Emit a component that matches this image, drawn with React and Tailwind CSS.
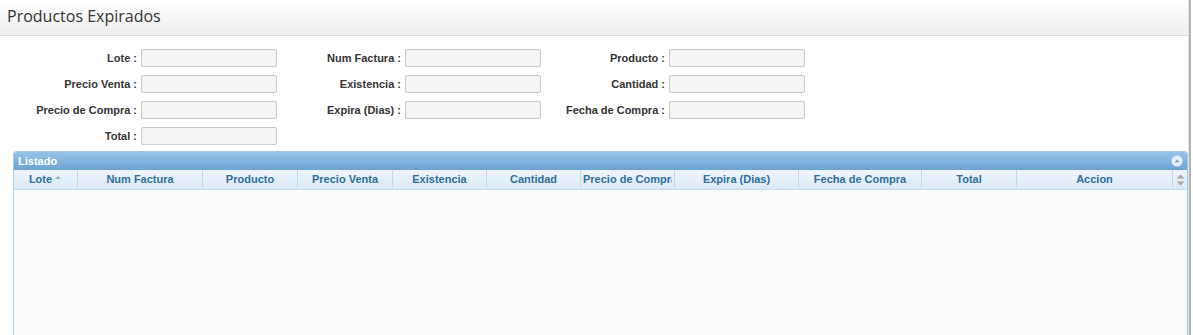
import React from "react";

const rows = [
  [["Lote :"], ["Num Factura :"], ["Producto :"]],
  [["Precio Venta :"], ["Existencia :"], ["Cantidad :"]],
  [["Precio de Compra :"], ["Expira (Dias) :"], ["Fecha de Compra :"]],
  [["Total :"]],
];

const cols = [
  { t: "Lote", w: 64, sort: true },
  { t: "Num Factura", w: 125 },
  { t: "Producto", w: 95 },
  { t: "Precio Venta", w: 95 },
  { t: "Existencia", w: 94 },
  { t: "Cantidad", w: 94 },
  { t: "Precio de Compra", w: 94 },
  { t: "Expira (Dias)", w: 124 },
  { t: "Fecha de Compra", w: 123 },
  { t: "Total", w: 95 },
  { t: "Accion", w: 156 },
];

function Field({ label }) {
  return (
    <div className="flex items-center w-[264px] shrink-0">
      <div className="w-[124px] text-right pr-[4px] text-[11px] font-bold text-[#333] whitespace-nowrap">{label}</div>
      <div className="w-[136px] h-[18px] bg-[#f4f4f4] border border-[#c8c8c8] rounded-[2px]" />
    </div>
  );
}

export default function App() {
  return (
    <div className="w-[1193px] h-[335px] bg-white flex overflow-hidden" style={{ fontFamily: '"Liberation Sans", Arial, sans-serif' }}>
      <div className="w-[1188px] h-full flex flex-col">
        <div className="h-[36px] shrink-0 bg-gradient-to-b from-white to-[#eeeeee] border-b border-[#d3dee0] flex items-center pl-[7px]">
          <span className="text-[16px] text-[#333] leading-none pb-[3px]" style={{ fontFamily: '"Open Sans", sans-serif' }}>Productos Expirados</span>
        </div>
        <div className="pl-[17px] pt-[13px] flex flex-col gap-[8px]">
          {rows.map((r, i) => (
            <div key={i} className="flex">
              {r.map((f, j) => (
                <Field key={j} label={f[0]} />
              ))}
            </div>
          ))}
        </div>
        <div className="ml-[13px] mt-[6px] flex-1 flex flex-col border border-[#a6c9e2] border-b-0 rounded-t-[4px] overflow-hidden">
          <div className="h-[18px] shrink-0 bg-gradient-to-b from-[#98c3e8] via-[#82b4df] to-[#6aa3d4] flex items-center justify-between px-[4px]">
            <span className="text-[11px] font-bold text-white leading-none">Listado</span>
            <svg width="12" height="12" viewBox="0 0 12 12">
              <circle cx="6" cy="6" r="5.5" fill="#e4eff9" />
              <path d="M3.5 7.2 L6 4.6 L8.5 7.2 Z" fill="#6fa0cc" />
            </svg>
          </div>
          <div className="h-[20px] shrink-0 flex bg-gradient-to-b from-[#eff6fd] to-[#dde9f5] border-b border-[#c5dbec]">
            {cols.map((c, i) => (
              <div
                key={i}
                className="shrink-0 border-r border-[#c5dbec] text-[11px] font-bold text-[#2e6e9e] flex items-center justify-center whitespace-nowrap overflow-hidden px-[2px]"
                style={{ width: c.w }}
              >
                <span className={c.w < 100 && c.t.length > 14 ? "block w-full overflow-hidden" : ""}>{c.t}</span>
                {c.sort && (
                  <svg width="8" height="10" viewBox="0 0 8 10" className="ml-[2px]">
                    <path d="M1 4 L4 1 L7 4 Z" fill="#8fb4d4" />
                    <path d="M1 6 L4 9 L7 6 Z" fill="#d6e4f0" />
                  </svg>
                )}
              </div>
            ))}
            <div className="flex-1 flex flex-col items-center justify-center gap-[2px]">
              <svg width="9" height="5" viewBox="0 0 9 5"><path d="M0.5 4.5 L4.5 0.5 L8.5 4.5 Z" fill="#a8a8a8" /></svg>
              <svg width="9" height="5" viewBox="0 0 9 5"><path d="M0.5 0.5 L4.5 4.5 L8.5 0.5 Z" fill="#a8a8a8" /></svg>
            </div>
          </div>
          <div className="flex-1 bg-[#fafcfc]" />
        </div>
      </div>
      <div className="w-[1px] h-full bg-[#e2e2e2]" />
      <div className="w-[2px] h-full bg-[#b4b4b4]" />
      <div className="flex-1 h-full bg-white" />
    </div>
  );
}
